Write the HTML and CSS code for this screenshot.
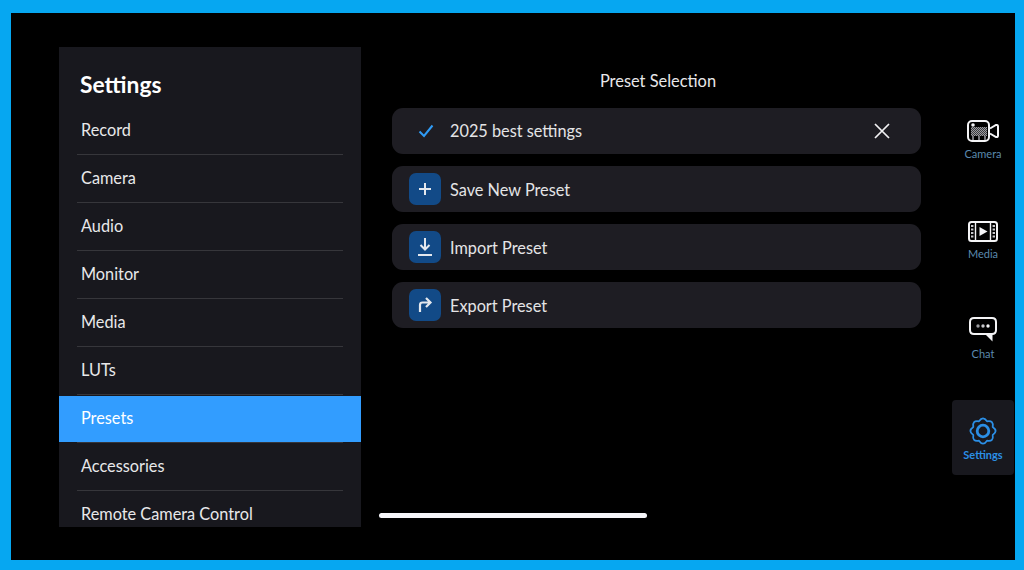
FILE: index.html
```html
<!DOCTYPE html>
<html lang="en">
<head>
<meta charset="utf-8">
<title>Settings</title>
<link rel="stylesheet" href="styles.css">
</head>
<body>
<div class="frame">
  <aside class="sidebar">
    <h1 class="sidebar-title">Settings</h1>
    <ul class="menu">
      <li class="menu-item">Record</li>
      <li class="menu-item">Camera</li>
      <li class="menu-item">Audio</li>
      <li class="menu-item">Monitor</li>
      <li class="menu-item">Media</li>
      <li class="menu-item">LUTs</li>
      <li class="menu-item active">Presets</li>
      <li class="menu-item">Accessories</li>
      <li class="menu-item">Remote Camera Control</li>
    </ul>
  </aside>
  <main class="main">
    <h2 class="main-title">Preset Selection</h2>
    <div class="row row-selected">
      <svg class="check" width="16" height="14" viewBox="0 0 16 14"><path d="M1.5 7.5 L6 12 L14.5 1.5" fill="none" stroke="#2f9bf5" stroke-width="2"/></svg>
      <span class="row-label row-label-selected">2025 best settings</span>
      <svg class="close" width="16" height="16" viewBox="0 0 16 16"><path d="M1 1 L15 15 M15 1 L1 15" fill="none" stroke="#f2f2f4" stroke-width="1.7"/></svg>
    </div>
    <div class="row">
      <span class="row-icon"><svg width="14" height="14" viewBox="0 0 14 14"><path d="M7 1 V13 M1 7 H13" fill="none" stroke="#e4e8ee" stroke-width="2"/></svg></span>
      <span class="row-label">Save New Preset</span>
    </div>
    <div class="row">
      <span class="row-icon"><svg width="16" height="20" viewBox="0 0 16 20"><path d="M8 1 V12 M3.500 8 L8 12.500 L12.500 8 M1 18 H15" fill="none" stroke="#e4e8ee" stroke-width="2"/></svg></span>
      <span class="row-label">Import Preset</span>
    </div>
    <div class="row">
      <span class="row-icon"><svg width="16" height="18" viewBox="0 0 16 18"><path d="M3 16 V9 Q3 6.500 5.500 6.500 H13 M9 2 L13.500 6.500 L9 11" fill="none" stroke="#e4e8ee" stroke-width="2.200"/></svg></span>
      <span class="row-label">Export Preset</span>
    </div>
  </main>
  <nav class="nav">
    <div class="nav-item">
      <svg width="32" height="22" viewBox="0 0 32 22">
        <defs>
          <pattern id="dither" width="2" height="2" patternUnits="userSpaceOnUse">
            <rect width="2" height="2" fill="#3a3a3e"/>
            <rect width="1" height="1" fill="#9c9ca0"/>
            <rect x="1" y="1" width="1" height="1" fill="#9c9ca0"/>
          </pattern>
        </defs>
        <rect x="1" y="1" width="21" height="20" rx="4" fill="none" stroke="#f4f4f6" stroke-width="2"/>
        <circle cx="6" cy="5" r="1.800" fill="#f4f4f6"/>
        <rect x="4" y="7" width="16" height="9" fill="url(#dither)"/>
        <path d="M6 16 v4 M12 16 v4 M18 16 v4" stroke="#77777c" stroke-width="2"/>
        <path d="M23 8.500 L29 5 Q31 4.500 31 6.500 V15.500 Q31 17.500 29 17 L23 13.500" fill="none" stroke="#f4f4f6" stroke-width="2"/>
      </svg>
      <span class="nav-label">Camera</span>
    </div>
    <div class="nav-item">
      <svg width="30" height="21" viewBox="0 0 30 21">
        <rect x="1" y="1" width="28" height="19" rx="2.500" fill="none" stroke="#f4f4f6" stroke-width="2"/>
        <path d="M7.500 1 V20 M22.500 1 V20" stroke="#f4f4f6" stroke-width="1.400"/>
        <path d="M4.200 4 V17 M25.800 4 V17" stroke="#c8c8cc" stroke-width="2.400" stroke-dasharray="2 1.500"/>
        <path d="M11.500 6 L19.500 10.500 L11.500 15 Z" fill="#f4f4f6"/>
      </svg>
      <span class="nav-label">Media</span>
    </div>
    <div class="nav-item">
      <svg width="28" height="25" viewBox="0 0 28 25">
        <path d="M5 1 H23 Q27 1 27 5 V13 Q27 17 23 17 H5 Q1 17 1 13 V5 Q1 1 5 1 Z" fill="none" stroke="#f4f4f6" stroke-width="2"/>
        <path d="M16 17 H23.500 V24.500 Z" fill="#f4f4f6"/>
        <circle cx="9" cy="9" r="1.700" fill="#9a9a9e"/>
        <circle cx="14" cy="9" r="1.700" fill="#c8c8cc"/>
        <circle cx="19" cy="9" r="1.700" fill="#f4f4f6"/>
      </svg>
      <span class="nav-label">Chat</span>
    </div>
    <div class="nav-item nav-item-active">
      <svg width="28" height="28" viewBox="0 0 28 28">
        <path d="M18.020 4.300 Q24.960 3.040 23.700 9.980 Q29.500 14 23.700 18.020 Q24.960 24.960 18.020 23.700 Q14 29.500 9.980 23.700 Q3.040 24.960 4.300 18.020 Q-1.500 14 4.300 9.980 Q3.040 3.040 9.980 4.300 Q14 -1.500 18.020 4.300 Z" fill="none" stroke="#2b8fe6" stroke-width="1.800" stroke-linejoin="round"/>
        <circle cx="14" cy="14" r="5.800" fill="none" stroke="#2b8fe6" stroke-width="2.800"/>
      </svg>
      <span class="nav-label">Settings</span>
    </div>
  </nav>
  <div class="home-bar"></div>
</div>
</body>
</html>
```

FILE: styles.css
```css
* { box-sizing: border-box; }
html, body { margin: 0; padding: 0; }
body { width: 1024px; height: 570px; overflow: hidden; font-family: Lato, "Liberation Sans", sans-serif; }

.frame {
  position: relative;
  display: flex;
  align-items: flex-start;
  width: 1024px;
  height: 570px;
  background: #000;
  border-style: solid;
  border-color: #06a7f1;
  border-width: 13px 9px 10px 11px;
}

.sidebar {
  width: 302px;
  height: 480px;
  margin: 34px 0 0 48px;
  background: #18181e;
  overflow: hidden;
  flex: none;
}
.sidebar-title {
  margin: 0;
  padding: 23px 0 0 21px;
  height: 60px;
  font-size: 22.8px;
  line-height: 28px;
  font-weight: 700;
  color: #fff;
}
.menu { list-style: none; margin: 0; padding: 0; }
.menu-item {
  height: 48px;
  margin: 0 18px;
  padding: 0 0 0 4px;
  font-size: 16.3px;
  line-height: 46px;
  color: #e8e8ea;
  border-bottom: 1px solid #36363b;
}
.menu-item:last-child {
  height: 47px;
  border-bottom: 0;
}
.menu-item.active {
  margin: 1px 0 0;
  height: 46px;
  padding-left: 22px;
  line-height: 44px;
  background: #329dff;
  color: #fff;
  border-bottom: 0;
}
.menu-item.active + .menu-item {
  height: 49px;
  line-height: 46px;
  border-top: 1px solid #36363b;
}

.main {
  width: 529px;
  margin-left: 31px;
  flex: none;
  display: flex;
  flex-direction: column;
  gap: 11.3px;
}
.main-title {
  margin: 0 0 -0.600px;
  padding: 56px 0 0 3px;
  height: 84px;
  text-align: center;
  font-size: 16.4px;
  line-height: 24px;
  font-weight: 400;
  color: #e8e8ea;
}
.row {
  display: flex;
  align-items: center;
  height: 46.7px;
  padding: 0 17px;
  gap: 9px;
  background: #1e1d23;
  border-radius: 11px;
}
.row-selected { padding-left: 26px; gap: 16px; }
.row-label { font-size: 16.3px; color: #e4e4e6; }
.row-label-selected { margin-bottom: 2px; }
.close { margin-left: auto; margin-right: 14px; }
.row-icon {
  display: flex;
  align-items: center;
  justify-content: center;
  width: 32px;
  height: 32px;
  background: #124a87;
  border-radius: 7px;
}

.nav {
  width: 62px;
  margin-left: 31px;
  flex: none;
  display: flex;
  flex-direction: column;
  align-items: center;
  padding-top: 67px;
}
.nav-item {
  display: flex;
  flex-direction: column;
  align-items: center;
  justify-content: flex-end;
  width: 62px;
  height: 100px;
  padding-bottom: 20px;
  gap: 5px;
}
.nav-item-active {
  height: 75px;
  margin-top: 20px;
  padding-bottom: 14px;
  gap: 3px;
  background: #18181e;
  border-radius: 4px;
}
.nav-label {
  font-size: 11px;
  line-height: 13px;
  color: #5b8aae;
}
.nav-item-active .nav-label { color: #2b8fe6; font-weight: 700; }

.home-bar {
  position: absolute;
  left: 368px;
  top: 500px;
  width: 268px;
  height: 5px;
  background: #f6f6fa;
  border-radius: 3px;
}
```
